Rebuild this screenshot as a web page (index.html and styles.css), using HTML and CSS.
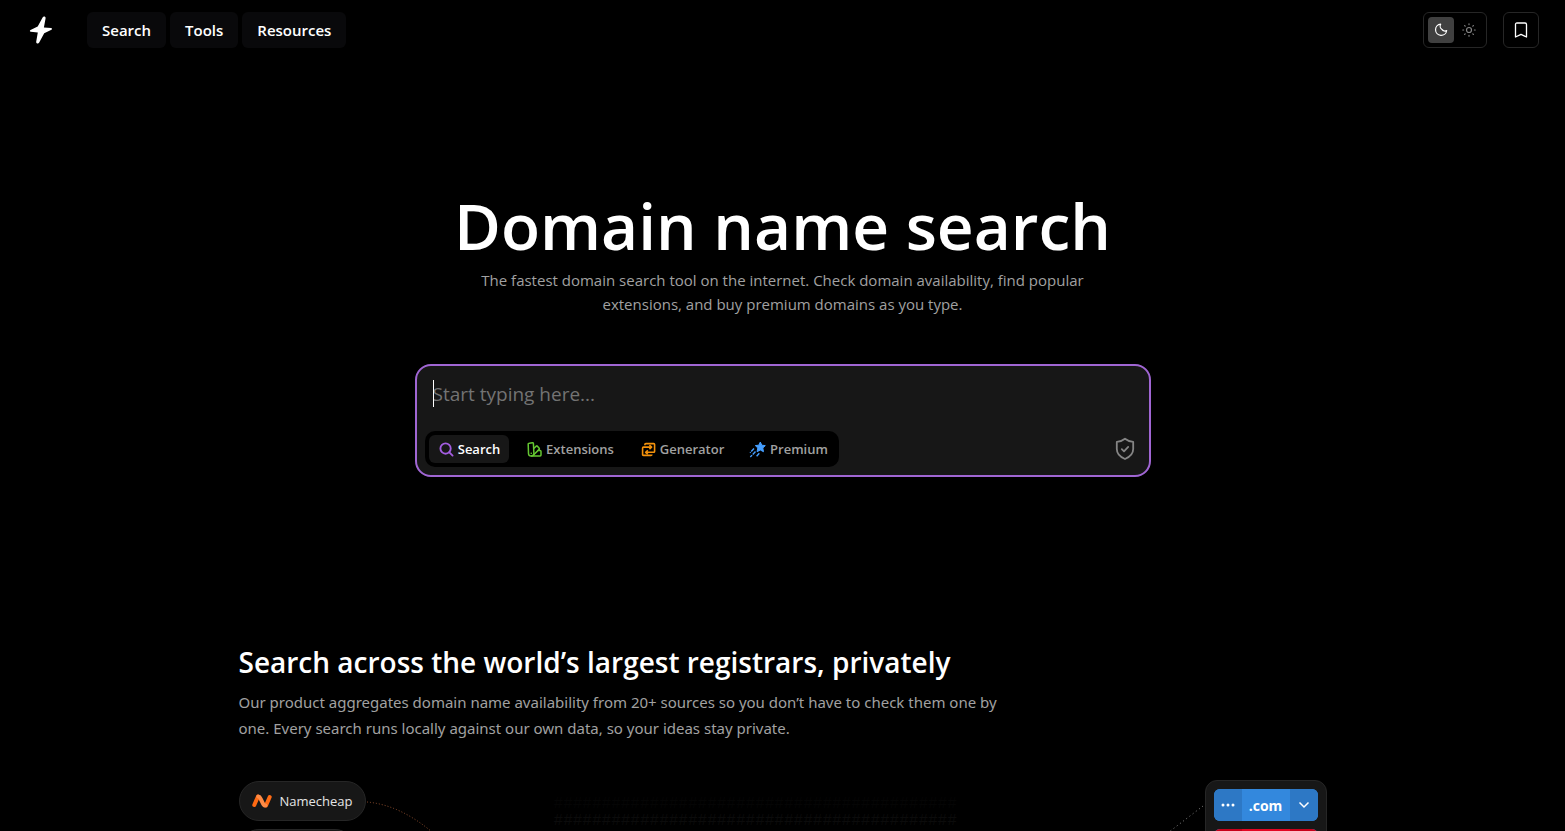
FILE: index.html
```html
<!DOCTYPE html>
<html lang="en">
<head>
<meta charset="utf-8">
<meta name="viewport" content="width=device-width, initial-scale=1">
<title>Domain name search</title>
<link rel="stylesheet" href="styles.css">
</head>
<body>
<header class="header">
  <a class="logo" href="#" aria-label="Home">
    <svg width="24" height="30" viewBox="0 0 24 30" fill="#fff"><path d="M13.600 2.500c.8-1.500 3.300-1 3 .8l-1.700 9.100 7.200.7c1 .1 1.200 1.200.4 1.700l-7.300 3.500-5 9.300c-.9 1.500-3.300 1-3-.9l1.600-9.300-7-.7c-1.100-.1-1.200-1.200-.3-1.700l7.200-3.400z"/></svg>
  </a>
  <nav class="nav">
    <button class="nav-item" type="button">Search</button>
    <button class="nav-item" type="button">Tools</button>
    <button class="nav-item" type="button">Resources</button>
  </nav>
  <div class="theme">
    <button class="theme-option selected" type="button" aria-label="Dark theme">
      <svg width="14" height="14" viewBox="0 0 14 14" fill="none" stroke="#fff" stroke-width="1.200" stroke-linejoin="round"><path d="M6.700 1.200A5.600 5.600 0 1 0 12.700 7.500A3.400 3.400 0 0 1 8 6.400A3.800 3.800 0 0 1 6.700 1.200Z"/></svg>
    </button>
    <button class="theme-option" type="button" aria-label="Light theme">
      <svg width="14" height="14" viewBox="0 0 14 14" fill="none" stroke="#858585" stroke-width="1.200" stroke-linecap="round"><circle cx="7" cy="7" r="2.500"/><path d="M7 .8v.8M7 12.400v.8M.8 7h.8M12.400 7h.8M2.600 2.600l.6.6M10.800 10.800l.6.6M2.600 11.400l.6-.6M10.800 3.200l.6-.6"/></svg>
    </button>
  </div>
  <button class="bookmark" type="button" aria-label="Saved domains">
    <svg width="14" height="16" viewBox="0 0 14 16" fill="none" stroke="#fff" stroke-width="1.300" stroke-linejoin="round"><path d="M1.500 2.500Q1.500 1 3 1h8q1.500 0 1.500 1.500V15L7 12.300 1.500 15z"/></svg>
  </button>
</header>
<main>
  <section class="hero">
    <h1 class="title">Domain name search</h1>
    <p class="lead">The fastest domain search tool on the internet. Check domain availability, find popular<br>extensions, and buy premium domains as you type.</p>
    <form class="search">
      <div class="field">
        <input class="query" type="text" placeholder="Start typing here..." aria-label="Domain name">
        <span class="caret"></span>
      </div>
      <div class="search-footer">
        <div class="tabs">
          <button class="tab active" type="button">
            <svg width="15" height="15" viewBox="0 0 16 16" fill="none" stroke="#a35de0" stroke-width="2" stroke-linecap="round"><circle cx="7" cy="7" r="5.500"/><path d="M11 11l3.500 3.500"/></svg>Search</button>
          <button class="tab" type="button">
            <svg width="15" height="15" viewBox="0 0 15 15" fill="none" stroke="#65c832" stroke-width="1.500" stroke-linejoin="round" stroke-linecap="round"><path d="M2.300 1.200l3.200-.4q.8-.1.900.7l.5 9.700a2.700 2.700 0 0 1-5.400.3L1.200 2.300q-.1-1 1.100-1.100z"/><path d="M6.700 6.500l2.600-2.400q.6-.5 1.100.1l1.800 2.100q.5.600-.1 1.100L6.500 13M10.600 8.600h2.500q.9 0 .9.900v3.600q0 .9-.9.900H4.500M4.200 11.200h.1"/></svg>Extensions</button>
          <button class="tab" type="button">
            <svg width="15" height="15" viewBox="0 0 16 16" fill="none" stroke="#f5920b" stroke-width="1.700" stroke-linejoin="round"><path d="M4.200 3.500V2.700q0-1 1-1h8.300q1 0 1 1V10q0 1-1 1H5.500M11.600 13.300q0 1-1 1H2.700q-1 0-1-1V6.500q0-1 1-1h8"/><path d="M9 3.400l2.300 2.100L9 7.600M7.300 8.900L5 11l2.300 2.100"/></svg>Generator</button>
          <button class="tab" type="button">
            <svg width="17" height="17" viewBox="0 0 17 17" fill="#459eff"><path d="M11.300 1l1.500 3.200 3.500.4-2.500 2.400.7 3.700-3.200-1.700-3.200 1.700.7-3.700-2.500-2.400 3.500-.4z" stroke="#459eff" stroke-linejoin="round"/><path d="M5 7.500L1 11.700M6.500 10.500L1.300 16M10.300 12.300L7 16" fill="none" stroke="#459eff" stroke-width="1.400" stroke-dasharray="4 1"/></svg>Premium</button>
        </div>
        <button class="shield" type="button" aria-label="Privacy">
          <svg width="20" height="24" viewBox="0 0 20 24" fill="none" stroke="#858585" stroke-width="1.800" stroke-linecap="round" stroke-linejoin="round"><path d="M10 1.800Q13.500 4.600 18.200 4.900V12c0 5-3.500 8-8.200 10-4.700-2-8.200-5-8.200-10V4.900Q6.500 4.600 10 1.800z"/><path d="M6.800 12.200l2.200 2.100 4.200-4.400"/></svg>
        </button>
      </div>
    </form>
  </section>
  <section class="sources">
    <h2 class="heading">Search across the world’s largest registrars, privately</h2>
    <p class="copy">Our product aggregates domain name availability from 20+ sources so you don’t have to check them one by<br>one. Every search runs locally against our own data, so your ideas stay private.</p>
    <div class="diagram">
      <div class="registrars">
        <div class="pill">
          <svg width="20" height="14" viewBox="0 0 20 14" fill="none" stroke-linecap="round" stroke-width="4"><path d="M6 2.500L2.300 11" stroke="#ff6a13"/><path d="M17.700 3L14 11.500" stroke="#ff6a13"/><path d="M6.300 2.500c1.200 0 1.600.8 2.100 1.900l2.600 5.200c.5 1.100 1.200 1.900 2.400 1.900" stroke="#ff8b45"/></svg>Namecheap
        </div>
        <div class="pill blank"></div>
      </div>
      <svg class="wire" width="68" height="52" viewBox="0 0 68 52" fill="none" stroke="#93502f" stroke-dasharray="1 2"><path d="M1 22Q34 25 66 52"/></svg>
      <div class="matrix" aria-hidden="true"><span class="faint">##########################################</span><br>##########################################</div>
      <svg class="wire" width="38" height="52" viewBox="0 0 38 52" fill="none" stroke="#858585" stroke-dasharray="1 3"><path d="M36 26L2 52"/></svg>
      <div class="results">
        <div class="result">
          <button class="part" type="button" aria-label="More"><svg width="14" height="4" viewBox="0 0 14 4" fill="#fff"><circle cx="2" cy="2" r="1.500"/><circle cx="7" cy="2" r="1.500"/><circle cx="12" cy="2" r="1.500"/></svg></button>
          <button class="part name" type="button">.com</button>
          <button class="part" type="button" aria-label="Expand"><svg width="12" height="8" viewBox="0 0 12 8" fill="none" stroke="#fff" stroke-width="1.500"><path d="M1.500 1.500L6 6l4.500-4.500"/></svg></button>
        </div>
        <div class="result red"><span class="part"></span><span class="part name"></span><span class="part"></span></div>
      </div>
    </div>
  </section>
</main>
</body>
</html>
```
FILE: styles.css
```css
* { box-sizing: border-box; }
body {
  margin: 0;
  height: 100vh;
  overflow: hidden;
  background: #000;
  color: #fff;
  font-family: "Open Sans", "Noto Sans", sans-serif;
}
button {
  border: 0;
  padding: 0;
  background: none;
  color: inherit;
  font: inherit;
  display: flex;
  align-items: center;
  justify-content: center;
}
svg { flex: none; display: block; }
h1, h2, p { margin: 0; }

.header {
  display: flex;
  align-items: center;
  padding: 12px 26px 12px 29px;
}
.logo { display: flex; margin-right: 34px; }
.nav { display: flex; gap: 4px; margin-right: auto; }
.nav-item {
  height: 36px;
  padding: 0 15px;
  border-radius: 6px;
  background: #09090b;
  font-size: 15px;
  font-weight: 600;
}
.theme {
  display: flex;
  gap: 2px;
  height: 36px;
  padding: 4px;
  margin-right: 16px;
  border: 1px solid #262626;
  border-radius: 6px;
}
.theme-option { width: 26px; height: 26px; border-radius: 4px; }
.theme-option.selected { background: #404040; }
.bookmark {
  width: 36px;
  height: 36px;
  border: 1px solid #262626;
  border-radius: 6px;
}

.hero { padding: 126px 24px 0; text-align: center; }
.title { font-size: 64px; line-height: 80px; font-weight: 600; }
.lead { margin-top: 2px; color: #a1a1a1; font-size: 15px; line-height: 24px; }
.search {
  max-width: 736px;
  margin: 48px auto 0;
  padding: 8px;
  border: 2px solid #a066d3;
  border-radius: 16px;
  background: #171717;
}
.field { position: relative; height: 40px; padding: 0 8px; }
.query {
  width: 100%;
  height: 40px;
  padding: 0;
  border: 0;
  outline: 0;
  background: none;
  color: #fff;
  font: 19px "Open Sans", "Noto Sans", sans-serif;
}
.query::placeholder { color: #737373; opacity: 1; }
.caret {
  position: absolute;
  left: 8px;
  top: 6px;
  width: 1px;
  height: 27px;
  background: #fff;
}
.search-footer {
  display: flex;
  align-items: center;
  justify-content: space-between;
  padding-top: 17px;
}
.tabs {
  display: grid;
  grid-template-columns: 80px 106px 102px 94px;
  gap: 8px;
  padding: 4px;
  border-radius: 10px;
  background: #000;
}
.tab {
  height: 28px;
  gap: 4px;
  padding-left: 2px;
  border-radius: 6px;
  color: #a1a1a1;
  font-size: 13px;
  font-weight: 600;
}
.tab.active { background: #171717; color: #fff; }
.shield { margin-right: 6px; }

.sources { max-width: 1136px; margin: 0 auto; padding: 166px 24px 0; }
.heading { font-size: 28px; line-height: 38px; font-weight: 600; }
.copy {
  margin-top: 8px;
  color: #a1a1a1;
  font-family: "Noto Sans", sans-serif;
  font-size: 15px;
  line-height: 26px;
}
.diagram { display: flex; margin-top: 39px; }
.registrars { display: grid; gap: 8px; padding-top: 1px; justify-items: start; align-content: start; }
.pill {
  display: flex;
  align-items: center;
  gap: 8px;
  height: 40px;
  padding: 0 12px;
  border: 1px solid #262626;
  border-radius: 20px;
  background: #171717;
  color: #e5e5e5;
  font-size: 13px;
}
.blank { width: 116px; }
.matrix {
  margin: 16px auto 0 120px;
  color: #0b0b0b;
  font: 16px/17px "Liberation Mono", monospace;
}
.faint { color: #050505; }
.results {
  display: grid;
  gap: 8px;
  padding: 8px;
  border: 1px solid #262626;
  border-radius: 12px;
  background: #171717;
}
.result {
  display: grid;
  grid-template-columns: 28px 48px 28px;
  height: 32px;
  border-radius: 6px;
  overflow: hidden;
  background: #3388dd;
}
.part { background: #2d78c5; }
.part.name { background: #3388dd; font-size: 14px; font-weight: 700; }
.red .part { background: #c70019; }
.red .part.name { background: #e30622; }
```
